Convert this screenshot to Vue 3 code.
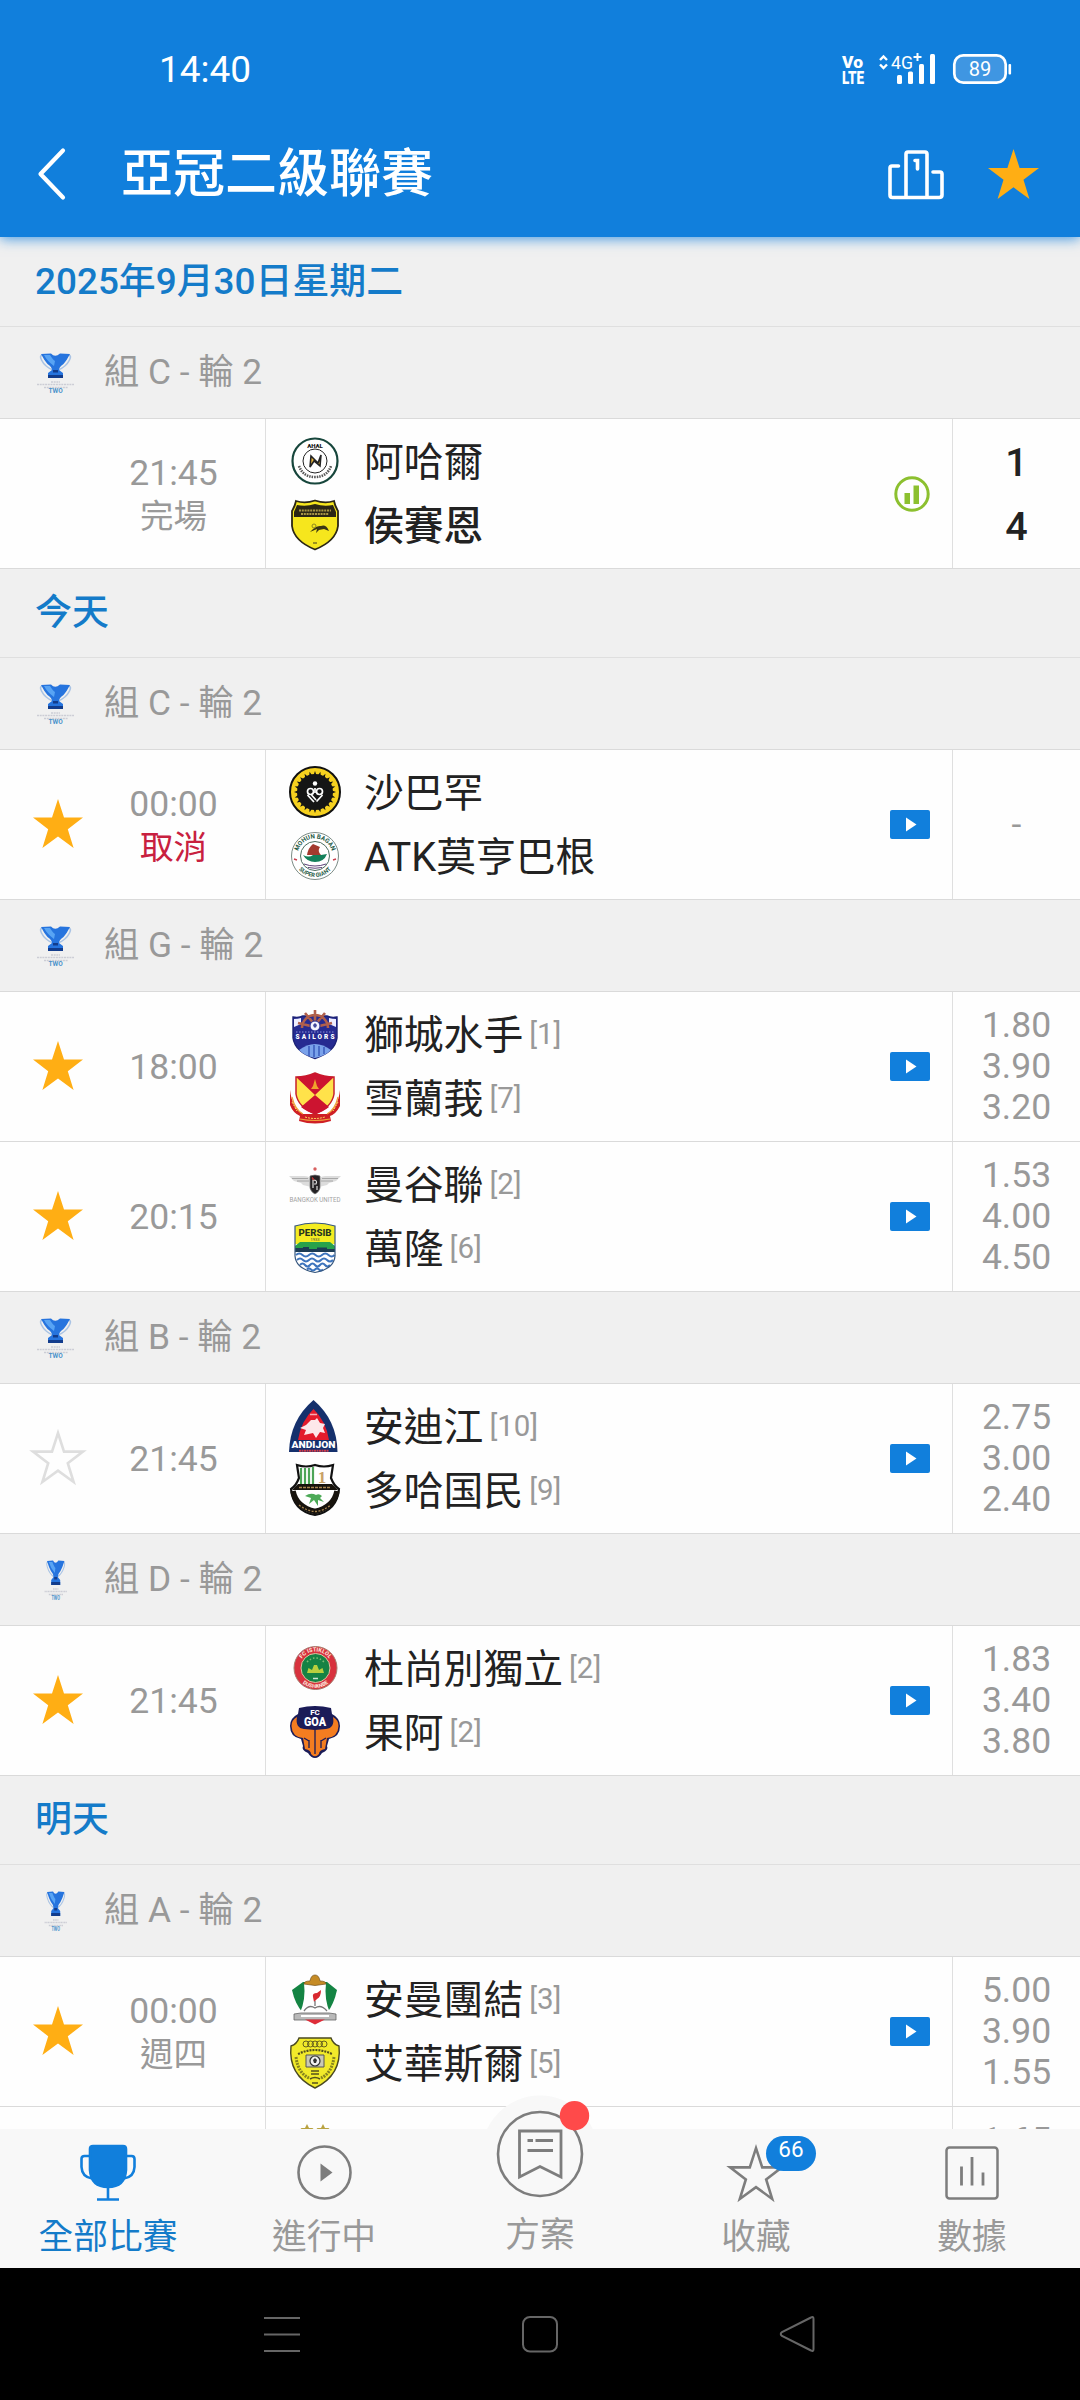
<script setup>
import { ref } from 'vue'

// Filled / outlined star shape shared by the header, the rows and the tab bar
const starPath = 'M25 0 L31 18.6 L50 18.6 L34.8 30.2 L40.6 49 L25 37.6 L9.4 49 L15.2 30.2 L0 18.6 L19 18.6 Z'

// Schedule grouped by day, then by group and round
const days = ref([
  {
    title: '2025年9月30日星期二',
    groups: [
      {
        name: '組 C - 輪 2',
        matches: [
          {
            time: '21:45', status: '完場', media: 'stats', score: ['1', '4'],
            teams: [{ name: '阿哈爾', crest: 'ahal' }, { name: '侯賽恩', crest: 'hussein', winner: true }]
          }
        ]
      }
    ]
  },
  {
    title: '今天',
    groups: [
      {
        name: '組 C - 輪 2',
        matches: [
          {
            star: 'on', time: '00:00', status: '取消', cancelled: true, media: 'video', odds: ['-'],
            teams: [{ name: '沙巴罕', crest: 'sepahan' }, { name: 'ATK莫亨巴根', crest: 'bagan' }]
          }
        ]
      },
      {
        name: '組 G - 輪 2',
        matches: [
          {
            star: 'on', time: '18:00', media: 'video', odds: ['1.80', '3.90', '3.20'],
            teams: [{ name: '獅城水手', rank: 1, crest: 'sailors' }, { name: '雪蘭莪', rank: 7, crest: 'selangor' }]
          },
          {
            star: 'on', time: '20:15', media: 'video', odds: ['1.53', '4.00', '4.50'],
            teams: [{ name: '曼谷聯', rank: 2, crest: 'bangkok' }, { name: '萬隆', rank: 6, crest: 'persib' }]
          }
        ]
      },
      {
        name: '組 B - 輪 2',
        matches: [
          {
            star: 'off', time: '21:45', media: 'video', odds: ['2.75', '3.00', '2.40'],
            teams: [{ name: '安迪江', rank: 10, crest: 'andijon' }, { name: '多哈国民', rank: 9, crest: 'ahli' }]
          }
        ]
      },
      {
        name: '組 D - 輪 2',
        narrow: true,
        matches: [
          {
            star: 'on', time: '21:45', media: 'video', odds: ['1.83', '3.40', '3.80'],
            teams: [{ name: '杜尚別獨立', rank: 2, crest: 'istiklol' }, { name: '果阿', rank: 2, crest: 'goa' }]
          }
        ]
      }
    ]
  },
  {
    title: '明天',
    groups: [
      {
        name: '組 A - 輪 2',
        narrow: true,
        matches: [
          {
            star: 'on', time: '00:00', status: '週四', media: 'video', odds: ['5.00', '3.90', '1.55'],
            teams: [{ name: '安曼團結', rank: 3, crest: 'wehdat' }, { name: '艾華斯爾', rank: 5, crest: 'wasl' }]
          },
          { odds: ['1.65', '', ''], teams: [{ crest: 'stars' }] }
        ]
      }
    ]
  }
])

// Bottom tabs
const tabs = ref([
  { key: 'all', label: '全部比賽' },
  { key: 'live', label: '進行中' },
  { key: 'tips', label: '方案' },
  { key: 'favorites', label: '收藏', badge: 66 },
  { key: 'data', label: '數據' }
])
const activeTab = ref('all')

// 24 short rays around the sun shaped crest
const rays = Array.from({ length: 24 }, (_, i) => i * 15)
</script>

<template>
  <div class="screen">
    <!-- Header with status bar -->
    <header class="header">
      <div class="status-bar">
        <span class="clock">14:40</span>
        <svg class="status-icons" width="176" height="36" viewBox="840 51 176 36" fill="#fff">
          <text x="842" y="67.500" font-size="17" font-weight="900" textLength="21" lengthAdjust="spacingAndGlyphs">Vo</text>
          <text x="842" y="84" font-size="17.500" font-weight="900" textLength="22" lengthAdjust="spacingAndGlyphs">LTE</text>
          <path d="M880 60 L883.5 56.5 L887 60 M880 64.500 L883.500 68 L887 64.500" fill="none" stroke="#fff" stroke-width="2.400" />
          <text x="891" y="69" font-size="17.500" textLength="22" lengthAdjust="spacingAndGlyphs">4G</text>
          <path d="M913.500 57 h8 M917.500 53 v8" stroke="#fff" stroke-width="2" />
          <rect x="897" y="75" width="5" height="9" rx="1.500" />
          <rect x="908" y="71.500" width="5" height="12.500" rx="1.500" />
          <rect x="919" y="64" width="5" height="20" rx="1.500" />
          <rect x="930" y="54" width="5" height="30" rx="1.500" />
          <rect x="954.300" y="55.300" width="51.400" height="27.400" rx="9" fill="#3f96e2" stroke="#fff" stroke-width="2.700" />
          <rect x="1008.500" y="64" width="2.600" height="10.500" rx="1" />
          <text x="980" y="75.700" font-size="20" text-anchor="middle">89</text>
        </svg>
      </div>
      <div class="title-bar">
        <svg class="back" width="30" height="52" viewBox="0 0 30 52">
          <path d="M27 2.500 L4.500 26 L27 49.500" fill="none" stroke="#fff" stroke-width="4.200" stroke-linecap="round" stroke-linejoin="round" />
        </svg>
        <h1>亞冠二級聯賽</h1>
        <svg class="podium" width="58" height="52" viewBox="0 0 58 52" fill="none" stroke="#fff" stroke-width="3.600" stroke-linejoin="round" stroke-linecap="round">
          <path d="M11.500 17 H5 Q3 17 3 19 V46 Q3 48.500 5.500 48.500 H52 Q55 48.500 55 46 V25 Q55 23 53 23 H46" />
          <path d="M19 48 V5 Q19 3 21 3 H38 Q40 3 40 5 V48" />
          <path d="M28 11.500 H30.500 V20" stroke-linejoin="miter" />
        </svg>
        <svg class="fav" width="51" height="50" viewBox="0 0 50 49"><path :d="starPath" fill="#ffae14" /></svg>
      </div>
    </header>

    <!-- Match list -->
    <main class="list">
      <section v-for="day in days" :key="day.title">
        <h2 class="day">{{ day.title }}</h2>
        <div v-for="(group, g) in day.groups" :key="g">
          <div class="group">
            <svg class="cup" width="39" height="42" viewBox="0 0 39 42">
              <g :transform="group.narrow ? 'translate(8 0) scale(.6 1)' : undefined">
                <path d="M7 3 Q3 3 5.500 8 Q9 15 17 18 M32 3 Q36 3 33.500 8 Q30 15 22 18" fill="none" stroke="#a9c3e4" stroke-width="1.600" />
                <path d="M5 2 L15 1.500 Q19 6 24 1.500 L34 2 Q31 8 27.500 12 Q23 15 23 18 L27 21 V26 H12 V21 L16 18 Q16 15 11.500 12 Q8 8 5 2Z" fill="#2674de" />
                <path d="M8 3 L14 3 Q17 8 19 9 L18 14 Q11 9 8 3Z" fill="#58a4f4" />
                <path d="M12 23 H27 V26 H12Z M17 18 H22 V20.500 H17Z" fill="#123c8c" />
                <path d="M15 30 H24 M1 32.500 H38 M8 35.500 H32" stroke="#cccdd5" stroke-width="1.600" stroke-dasharray="2 .7" />
                <text x="19.500" y="41" font-size="6.500" font-weight="700" fill="#4c93cb" text-anchor="middle">TWO</text>
              </g>
            </svg>
            <span class="group-name">{{ group.name }}</span>
          </div>

          <div v-for="(match, m) in group.matches" :key="m" class="match">
            <div class="star">
              <svg v-if="match.star === 'on'" width="50" height="49" viewBox="0 0 50 49"><path :d="starPath" fill="#ffae14" /></svg>
              <svg v-else-if="match.star === 'off'" width="52" height="53" viewBox="-1 -2 52 53"><path :d="starPath" fill="none" stroke="#dedede" stroke-width="2.600" /></svg>
            </div>
            <div class="when" :class="{ stacked: match.status }">
              <span>{{ match.time }}</span>
              <span v-if="match.status" class="status" :class="{ cancelled: match.cancelled }">{{ match.status }}</span>
            </div>

            <div class="teams">
              <div v-for="team in match.teams" :key="team.crest" class="team">
                <svg class="crest" width="52" height="52" viewBox="0 0 52 52">
                  <g v-if="team.crest === 'ahal'">
                    <circle cx="26" cy="26" r="22.500" fill="#fff" stroke="#17463c" stroke-width="2.200" />
                    <circle cx="26" cy="26" r="12" fill="#fff" stroke="#222" stroke-width="1" />
                    <text x="26" y="12.500" font-size="6" font-weight="900" text-anchor="middle" fill="#111">AHAL</text>
                    <path d="M10 31 Q14 42 26 42 Q38 42 42 31" fill="none" stroke="#555" stroke-width="2.600" stroke-dasharray="1.500 1" />
                    <path d="M21 32 L22 21 L29 28 L32 20 L31 31 L25 26Z" fill="#e8b43a" stroke="#222" stroke-width="1.600" />
                  </g>
                  <g v-else-if="team.crest === 'hussein'">
                    <path d="M7 2 Q16 5 26 1.500 Q36 5 45 2 Q46 7 49 12 V27 Q47 42 26 50.500 Q5 42 3 27 V12 Q6 7 7 2Z" fill="#f6e61d" stroke="#2b2615" stroke-width="1.800" />
                    <path d="M8 6 Q17 8 26 5 Q35 8 44 6 L47 13 V18 H5 V13Z" fill="#2b2615" />
                    <path d="M10 11.500 H42 M12 15 H40" stroke="#a89545" stroke-width="1.800" stroke-dasharray="2 .8" />
                    <path d="M21 33 Q27 26 32 27 Q37 25 40 32 L35 30 L30 31 L27 34 L28 30Z" fill="#3a3515" />
                    <circle cx="25" cy="27" r="2" fill="none" stroke="#8e8820" />
                    <path d="M24 44 H28" stroke="#7c7520" stroke-width="1.500" />
                  </g>
                  <g v-else-if="team.crest === 'sepahan'">
                    <circle cx="26" cy="26" r="25" fill="#f6d11f" stroke="#111" stroke-width="2" />
                    <path v-for="deg in rays" :key="deg" d="M24.600 9 L26 5 L27.400 9Z" fill="#111" :transform="`rotate(${deg} 26 26)`" />
                    <circle cx="26" cy="26" r="18" fill="#151515" />
                    <circle cx="26" cy="17.500" r="2.200" fill="#fff" />
                    <circle cx="21.500" cy="25.500" r="3" fill="none" stroke="#fff" stroke-width="1.700" />
                    <circle cx="30.500" cy="25.500" r="3" fill="none" stroke="#fff" stroke-width="1.700" />
                    <path d="M18.500 29 L25 36 M22.500 29 L27 34 M33.500 29 L27.500 35.500 M26 22 V27" stroke="#fff" stroke-width="1.700" />
                  </g>
                  <g v-else-if="team.crest === 'bagan'">
                    <circle cx="26" cy="26" r="23.500" fill="#fff" stroke="#5b6d66" stroke-width=".8" />
                    <circle cx="26" cy="26" r="14.500" fill="#fff" stroke="#4c6e60" stroke-width="1" />
                    <path id="bagan-top" d="M8.500 26 A17.500 17.500 0 0 1 43.500 26" fill="none" />
                    <path id="bagan-bottom" d="M5 26 A21 21 0 0 0 47 26" fill="none" />
                    <text font-size="6.200" font-weight="700" fill="#1f5b46"><textPath href="#bagan-top" startOffset="50%" text-anchor="middle">MOHUN BAGAN</textPath></text>
                    <text font-size="5.800" font-weight="700" fill="#1f5b46"><textPath href="#bagan-bottom" startOffset="50%" text-anchor="middle">SUPER GIANT</textPath></text>
                    <path d="M18 25 Q19 18 24 14 L31 17 Q28 21 32 25Z" fill="#a33a2e" />
                    <path d="M14 25 Q20 28 24 25 H32 L38 24 Q35 32 26 32 Q18 32 14 25Z" fill="#13805a" />
                    <path d="M15 34 Q26 38 37 34 M19 37.500 Q26 39 33 37.500" fill="none" stroke="#315" stroke-width=".8" />
                    <path d="M5 29 l3 1 M44 30 l3 -1" stroke="#c8404f" stroke-width="1.500" />
                  </g>
                  <g v-else-if="team.crest === 'sailors'">
                    <path d="M4 9 Q10 10 14 8 H38 Q42 10 48 9 V30 Q46 44 26 50.500 Q6 44 4 30Z" fill="#262b91" stroke="#1c2276" stroke-width="1.400" />
                    <path d="M5 11 Q9 11 12 10 L12 16 L5 19Z M47 11 Q43 11 40 10 L40 16 L47 19Z" fill="#eef" />
                    <path d="M13 20 A13 13 0 0 1 39 20 M26 17 V2 M26 17 L16 5 M26 17 L36 5 M26 19 L9 15 M26 19 L43 15" fill="none" stroke="#b0604c" stroke-width="2.600" />
                    <circle cx="26" cy="18" r="5" fill="#f5f5ff" stroke="#262b91" stroke-width="1" />
                    <path d="M24 17 l2 -2 l2 2 l-1 2.500 h-2Z" fill="#444a9d" />
                    <text x="26" y="31" font-size="6.500" font-weight="900" fill="#fff" text-anchor="middle" textLength="39">SAILORS</text>
                    <path d="M10 42 Q18 36 26 36 Q34 36 42 42 Q36 48 26 50 Q16 48 10 42Z" fill="#7aa2ea" />
                    <path d="M20 38 V48 M25 37 V49 M30 38 V48 M35 39 V46" stroke="#2f50b5" stroke-width="1.300" />
                    <path d="M7 24 H45" stroke="#8b91d9" stroke-width="1" stroke-dasharray="1.500 1.500" />
                  </g>
                  <g v-else-if="team.crest === 'selangor'">
                    <path d="M1 18 Q3 36 14 42 L38 42 Q49 36 51 18 V34 Q47 42 41 44 L42 49 Q26 54 10 49 L11 44 Q4 41 1 33Z" fill="#cf1f24" />
                    <path d="M3 25 Q6 38 14 42 M49 25 Q46 38 38 42 M11 47 Q26 50 41 47" fill="none" stroke="#f0a33c" stroke-width="1.200" />
                    <path d="M7 5 Q17 5 26 1 Q35 5 45 5 V22 Q43 35 26 42 Q9 35 7 22Z" fill="#ffe24a" stroke="#c6202c" stroke-width="1.500" />
                    <path d="M7 5 Q17 5 26 1 Q35 5 45 5 L26 23Z M26 23 L40 35 Q34 40 26 42 Q18 40 12 35Z" fill="#cc1430" />
                    <path d="M26 7 L28 14 L30 17 H22 L24 14Z" fill="#f0a42c" />
                    <path d="M16 45 Q26 48 36 45 M3 30 L8 39 M49 30 L44 39" fill="none" stroke="#ffdf61" stroke-width="1" stroke-dasharray="2 1" />
                  </g>
                  <g v-else-if="team.crest === 'bangkok'">
                    <circle cx="26" cy="11" r="1.700" fill="#d8605f" />
                    <path d="M0 18 H15 Q20 18 22 21 V29 L14 27 L12 25 L5 23Z M52 18 H37 Q32 18 30 21 V29 L38 27 L40 25 L47 23Z" fill="#dcdcdc" />
                    <path d="M3 20.500 H19 M8 23 H20 M49 20.500 H33 M44 23 H32" stroke="#9a9a9a" stroke-width=".8" />
                    <path d="M21 18 Q26 16 31 18 V30 Q30 34 26 36 Q22 34 21 30Z" fill="#242124" stroke="#777" stroke-width=".7" />
                    <path d="M24 30 V22 Q29 22 27 26 H25 M28 28 V32" fill="none" stroke="#ddd" stroke-width="1.200" />
                    <path d="M23 19.500 L25 22" stroke="#b33" stroke-width="1.300" />
                    <text x="26" y="43.500" font-size="6.500" fill="#a3a3a3" text-anchor="middle" textLength="51" lengthAdjust="spacingAndGlyphs">BANGKOK UNITED</text>
                  </g>
                  <g v-else-if="team.crest === 'persib'">
                    <path d="M6 4 Q26 -2 46 4 V34 Q45 47 26 50.500 Q7 47 6 34Z" fill="#fff" />
                    <path d="M6 4 Q26 -2 46 4 V22 H6Z" fill="#f4ec21" />
                    <path d="M6 24 L11 20 H41 L46 24 V28 H6Z" fill="#28a24b" />
                    <path d="M6 26 H14 V25 H20 V27 H28 V25.500 H38 V27 H46 V30 H6Z" fill="#1d3c55" />
                    <path d="M7 33 q3.300 -3 6.500 0 t6.500 0 t6.500 0 t6.500 0 t6.500 0 t6 0 M8 38 q3 -3 6 0 t6 0 t6 0 t6 0 t6 0 t6 0 M11 43 q2.500 -3 5 0 t5 0 t5 0 t5 0 t5 0 t5 0 M18 47.500 q2 -2 4 0 t4 0 t4 0 t4 0" fill="none" stroke="#3d74bd" stroke-width="2" />
                    <path d="M6 4 Q26 -2 46 4 V34 Q45 47 26 50.500 Q7 47 6 34Z" fill="none" stroke="#36577e" stroke-width="1.200" />
                    <text x="26" y="13.500" font-size="9" font-weight="800" fill="#263520" text-anchor="middle" textLength="33" lengthAdjust="spacingAndGlyphs">PERSIB</text>
                    <text x="26" y="18.500" font-size="4" fill="#444" text-anchor="middle">1933</text>
                  </g>
                  <g v-else-if="team.crest === 'andijon'">
                    <path d="M24.500 0 Q48 20 48.500 52 H0 Q1 20 24.500 0Z" fill="#15306c" />
                    <path d="M24.500 9 Q37 21 40 40 H9 Q12 21 24.500 9Z" fill="#e31b2c" />
                    <path d="M11 28 L17 25 L22 20 L26 20 L28 18 L31 23 L36 24 L34 28 L36 33 L31 32 L27 38 L24 33 L15 35 L17 30Z" fill="#fff" opacity=".9" />
                    <path d="M21 14.500 H28" stroke="#f6aeb4" stroke-width="1.500" />
                    <text x="24.500" y="47.500" font-size="8.500" font-weight="900" fill="#fff" text-anchor="middle" textLength="44" lengthAdjust="spacingAndGlyphs">ANDIJON</text>
                    <path d="M10 50.700 H40" stroke="#d33b48" stroke-width="2" stroke-dasharray="2 .5" />
                  </g>
                  <g v-else-if="team.crest === 'ahli'">
                    <path d="M8 1 Q17 4 26 1 Q35 4 44 1 L42 14 Q45 22 50 25 Q48 47 26 51 Q4 47 2 25 Q7 22 10 14Z" fill="#fff" stroke="#111" stroke-width="2.200" />
                    <path d="M12 4 V20 M16 4 V20 M20 4 V20 M24 3 V20" stroke="#4da557" stroke-width="2.200" />
                    <text x="33" y="19" font-size="17" font-family="'Liberation Serif', serif" font-weight="700" fill="#c9a367" text-anchor="middle">1</text>
                    <path d="M9 20 H43 L49 26 H3Z" fill="#17130d" />
                    <path d="M10 23.500 H42" stroke="#a98651" stroke-width="1.600" stroke-dasharray="3 1" />
                    <path d="M4 27 Q7 43 26 47.500 Q45 43 48 27" fill="none" stroke="#17130d" stroke-width="5.500" />
                    <path d="M10 41 Q18 47 26 47.500 Q34 47 42 41" fill="none" stroke="#a98651" stroke-width="1.300" stroke-dasharray="2 1.500" />
                    <path d="M16 32 Q22 28 27 31 Q30 29 33 32 L31 34 L35 38 L29 36 L29 42 L25 36 L20 40 L22 34Z" fill="#4daa57" />
                  </g>
                  <g v-else-if="team.crest === 'istiklol'">
                    <circle cx="26.500" cy="26" r="21.500" fill="#d8323e" stroke="#a97d70" stroke-width="1" />
                    <circle cx="26.500" cy="26" r="14.500" fill="#158244" stroke="#e5c1a0" stroke-width="1" />
                    <path id="ist-top" d="M10 26 A16.500 16.500 0 0 1 43 26" fill="none" />
                    <path id="ist-bottom" d="M6.500 26 A20 20 0 0 0 46.500 26" fill="none" />
                    <text font-size="5.600" font-weight="800" fill="#fbe3da"><textPath href="#ist-top" startOffset="50%" text-anchor="middle">FC ISTIKLOL</textPath></text>
                    <text font-size="5.400" font-weight="800" fill="#fbe3da"><textPath href="#ist-bottom" startOffset="50%" text-anchor="middle">DUSHANBE</textPath></text>
                    <path d="M18 31 L19.500 26 L23 28 L25 23 H28 L30 28 L33.500 26 L35 31Z M20 33 H33" fill="#b9cf3e" />
                    <path d="M18 20 Q26.500 12 35 20" fill="none" stroke="#7fbc74" stroke-width="1.500" stroke-dasharray="1.500 2" />
                    <path d="M24 36.500 H29" stroke="#cfe4d5" stroke-width="1.500" />
                  </g>
                  <g v-else-if="team.crest === 'goa'">
                    <path d="M10 2 Q26 -2 42 2 L43 8 Q51 12 51 20 Q51 31 40 33 L38 40 Q40 44 33 47 Q30 52 26 52 Q22 52 19 47 Q12 44 14 40 L12 33 Q1 31 1 20 Q1 12 9 8Z" fill="#1b1c58" />
                    <path d="M8 11 Q2.500 14 2.500 20 Q3 31 14 32 L16 43 Q22 44 22 48 Q25 51 26 50 Q27 51 30 48 Q30 44 36 43 L38 32 Q49 31 49.500 20 Q49.500 14 44 11 Q46 22 37 23 L26 24 L15 23 Q6 22 8 11Z" fill="#f47d20" />
                    <path d="M26 24 V48 M20 34 V42 M32 34 V42 M15 32 L20 35 M37 32 L32 35" stroke="#1b1c58" stroke-width="1.300" fill="none" />
                    <text x="26" y="9" font-size="8" font-weight="800" fill="#fff" text-anchor="middle">FC</text>
                    <text x="26" y="20" font-size="12" font-weight="900" fill="#fff" text-anchor="middle" textLength="22" lengthAdjust="spacingAndGlyphs">GOA</text>
                  </g>
                  <g v-else-if="team.crest === 'wehdat'">
                    <path d="M14 9 L38 9 L48 17 Q45 31 38 40 L26 47 L14 40 Q6 31 3 17Z" fill="#148443" />
                    <path d="M15 10 H37 Q35 26 41 40 H11 Q17 26 15 10Z" fill="#fff" />
                    <path d="M15 11 Q15 8 21 8 Q22 2 26 2 Q30 2 31 8 Q37 8 37 11 L26 12.500Z" fill="#c58b25" stroke="#735018" stroke-width=".7" />
                    <path d="M24 24 Q23 20 28 20 L32 17 Q32 24 28 26 L25 29Z" fill="#d82930" />
                    <path d="M26 28 V33 M15 38 Q20 31 26 35 Q32 31 38 38" fill="none" stroke="#777" stroke-width="1.300" />
                    <path d="M5 41 L12 40 H40 L47 41 V47 H5Z" fill="#b9b9b9" stroke="#666" stroke-width=".8" />
                    <path d="M12 43 H40" stroke="#fff" stroke-width="2" />
                    <path d="M16 46.500 H36 L26 51.500Z" fill="#de2d39" />
                  </g>
                  <g v-else-if="team.crest === 'wasl'">
                    <path d="M10 1 H42 Q44 7 50 9 Q53 38 26 51 Q-1 38 2 9 Q8 7 10 1Z" fill="#f1ea2a" stroke="#4a4922" stroke-width="1.400" />
                    <g fill="none" stroke="#66611d" stroke-width="1">
                      <circle cx="17" cy="7" r="3" /><circle cx="21.500" cy="7" r="3" /><circle cx="26" cy="7" r="3" /><circle cx="30.500" cy="7" r="3" /><circle cx="35" cy="7" r="3" />
                    </g>
                    <path d="M9 17 Q26 9 43 17" fill="none" stroke="#55511c" stroke-width="2.200" stroke-dasharray="2 1" />
                    <path d="M7 20 Q9 36 20 41 M45 20 Q43 36 32 41" fill="none" stroke="#87841f" stroke-width="3" stroke-dasharray="2 1" />
                    <path d="M17 18 H35 V30 H17Z" fill="#c9c9b4" stroke="#555" stroke-width="1" />
                    <circle cx="26" cy="24" r="5" fill="#efefef" stroke="#333" stroke-width="1.200" />
                    <path d="M24 23 l2 -2 l2 2 l-1 3 h-2Z" fill="#333" />
                    <path d="M22 34 H30 M22 37 H30 M21 42 Q26 39 31 42 M23 46 H29" stroke="#55511c" stroke-width="1.600" fill="none" />
                  </g>
                  <g v-else-if="team.crest === 'stars'" fill="#b9a341">
                    <path d="M18 1 L20 5 H24.500 L21 8.500 L22.500 13 L18 10 L13.500 13 L15 8.500 L11.500 5 H16Z" />
                    <path d="M34 1 L36 5 H40.500 L37 8.500 L38.500 13 L34 10 L29.500 13 L31 8.500 L27.500 5 H32Z" />
                  </g>
                </svg>
                <span class="name" :class="{ winner: team.winner }">{{ team.name }}</span>
                <span v-if="team.rank" class="rank">[{{ team.rank }}]</span>
              </div>
            </div>

            <div class="media">
              <svg v-if="match.media === 'video'" width="40" height="29" viewBox="0 0 40 29">
                <rect width="40" height="29" rx="2" fill="#117fdc" />
                <path d="M16 7.500 L26.500 14.500 L16 21.500Z" fill="#fff" />
              </svg>
              <svg v-else-if="match.media === 'stats'" width="36" height="36" viewBox="0 0 36 36">
                <circle cx="18" cy="18" r="16.200" fill="none" stroke="#8cc02f" stroke-width="3" />
                <path d="M10.500 17 H16 V28 H10.500Z M19.500 9.500 H25 V28 H19.500Z" fill="#8cc02f" />
              </svg>
            </div>

            <div v-if="match.score" class="result score">
              <span v-for="(goals, s) in match.score" :key="s">{{ goals }}</span>
            </div>
            <div v-else class="result">
              <span v-for="(odd, o) in match.odds" :key="o">{{ odd }}</span>
            </div>
          </div>
        </div>
      </section>
    </main>

    <!-- Tab bar -->
    <nav class="tabs">
      <div v-for="tab in tabs" :key="tab.key" class="tab" :class="[tab.key, { active: tab.key === activeTab }]" @click="activeTab = tab.key">
        <div class="icon">
          <svg v-if="tab.key === 'all'" width="56" height="57" viewBox="0 0 56 57" fill="none" stroke="#117fdc" stroke-width="2.600">
            <path d="M10 11 H4.500 Q1.500 11 1.500 14 V22 Q2 32 12 33.500 M46 11 H51.500 Q54.500 11 54.500 14 V22 Q54 32 44 33.500" />
            <path d="M10 4 Q10 1 13 1 H43 Q46 1 46 4 V25 Q45 42 28 42 Q11 42 10 25Z" fill="#117fdc" />
            <path d="M28 40 V54 M17 54.500 H39" />
          </svg>
          <svg v-else-if="tab.key === 'live'" width="56" height="56" viewBox="0 0 56 56">
            <circle cx="28.500" cy="27.500" r="26" fill="none" stroke="#7d7d7d" stroke-width="2.600" />
            <path d="M24.500 18.500 L36.500 27.500 L24.500 36.500Z" fill="#7d7d7d" />
          </svg>
          <svg v-else-if="tab.key === 'tips'" class="bump" width="120" height="120" viewBox="0 0 120 120" fill="none" stroke="#7d7d7d">
            <circle cx="60" cy="60" r="58.500" fill="#f8f8f8" stroke="none" />
            <circle cx="60" cy="60" r="42" stroke-width="2.600" />
            <path d="M39.500 37 H81 V83 L60 72.500 L39.500 83Z" stroke-width="2.800" />
            <path d="M47.500 46.500 H53 M55.500 46.500 H73 M47.500 56.500 H73" stroke-width="2.800" />
            <circle cx="94.500" cy="21.700" r="14.700" fill="#ff4a4a" stroke="none" />
          </svg>
          <svg v-else-if="tab.key === 'favorites'" width="60" height="56" viewBox="-1 -3 52 54">
            <path :d="starPath" fill="none" stroke="#7d7d7d" stroke-width="2.500" />
          </svg>
          <svg v-else width="56" height="56" viewBox="0 0 56 56" fill="none" stroke="#7d7d7d" stroke-width="2.800">
            <rect x="2.500" y="2.500" width="51" height="51" rx="3" stroke-width="2.500" />
            <path d="M17.500 21.500 V40.500 M28 12 V40.500 M39 27.500 V40.500" />
          </svg>
          <span v-if="tab.badge" class="badge">{{ tab.badge }}</span>
        </div>
        <span class="label">{{ tab.label }}</span>
      </div>
    </nav>

    <!-- System navigation -->
    <div class="system-nav">
      <svg width="38" height="38" viewBox="0 0 38 38"><path d="M1 3 H37 M1 19.500 H37 M1 36 H37" stroke="#666" stroke-width="2.200" /></svg>
      <svg width="38" height="38" viewBox="0 0 38 38"><rect x="2" y="2" width="34" height="34.500" rx="7" fill="none" stroke="#666" stroke-width="2" /></svg>
      <svg width="38" height="38" viewBox="0 0 38 38"><path d="M34.500 4 V34 Q34.500 37 32 35.500 L3 21 Q0.500 19 3 17 L32 2.500 Q34.500 1 34.500 4Z" fill="none" stroke="#666" stroke-width="2" /></svg>
    </div>
  </div>
</template>

<style>
body {
  margin: 0;
}
</style>

<style scoped>
.screen {
  width: 1080px;
  height: 2400px;
  display: flex;
  flex-direction: column;
  overflow: hidden;
  background: #f0f0f0;
  color: #222;
  font-family: Roboto, 'Noto Sans CJK TC', sans-serif;
}

svg {
  display: block;
  flex: none;
  overflow: visible;
}

/* Header */
.header {
  position: relative;
  z-index: 1;
  height: 237px;
  flex: none;
  background: #117fdc;
  color: #fff;
  box-shadow: 0 2px 12px rgba(17, 127, 220, 0.75);
}

.status-bar {
  height: 82px;
  padding: 28px 64px 0 159px;
  display: flex;
  align-items: center;
  justify-content: space-between;
}

.clock {
  font-size: 37px;
}

.title-bar {
  height: 127px;
  padding: 0 41px 0 36px;
  display: flex;
  align-items: center;
}

h1 {
  flex: 1;
  margin: 2px 0 0 55px;
  font-size: 52px;
  font-weight: 500;
  line-height: 60px;
}

.podium {
  margin: 3px 43px 0 0;
}

/* List */
.list {
  flex: 1;
  min-height: 0;
  padding-top: 1px;
  overflow: hidden;
}

.day {
  height: 88px;
  margin: 0;
  padding-left: 35px;
  border-bottom: 1px solid #dfdfdf;
  color: #147bc9;
  font-size: 36.9px;
  font-weight: 500;
  line-height: 88px;
}

.group {
  height: 91px;
  padding-left: 36px;
  display: flex;
  align-items: center;
  gap: 29px;
  border-bottom: 1px solid #dadada;
  color: #999;
  font-size: 35.3px;
}

.group-name {
  padding-bottom: 9px;
}

.match {
  height: 149px;
  display: flex;
  border-bottom: 1px solid #dadada;
  background: #fefefe;
}

.star {
  width: 115px;
  padding-bottom: 2px;
  display: flex;
  align-items: center;
  justify-content: center;
}

.when {
  width: 117px;
  padding-right: 33px;
  display: flex;
  flex-direction: column;
  align-items: center;
  justify-content: center;
  border-right: 1px solid #dfdfdf;
  color: #999;
  font-size: 35.5px;
  line-height: 44px;
}

.stacked {
  padding-top: 3px;
}

.status {
  font-size: 33.5px;
}

.cancelled {
  color: #c8203f;
}

.teams {
  flex: 1;
  padding: 10px 0 0 23px;
}

.team {
  height: 64px;
  display: flex;
  align-items: center;
}

.name {
  margin-left: 23px;
  padding-top: 3px;
  font-size: 39.8px;
  line-height: 60px;
}

.winner {
  font-weight: 500;
}

.rank {
  margin-left: 6px;
  color: #999;
  font-size: 29.5px;
}

.media {
  width: 62px;
  display: flex;
  align-items: center;
  justify-content: flex-end;
  padding-right: 22px;
}

.result {
  width: 127px;
  display: flex;
  flex-direction: column;
  align-items: center;
  justify-content: center;
  border-left: 1px solid #dfdfdf;
  color: #999;
  font-size: 35.5px;
}

.result span {
  height: 41px;
  line-height: 41px;
}

.score {
  color: #222;
  font-size: 39.5px;
  font-weight: 500;
}

.score span {
  height: 64px;
  line-height: 65px;
}

/* Tab bar */
.tabs {
  position: relative;
  height: 139px;
  flex: none;
  display: flex;
  background: #f8f8f8;
}

.tab {
  flex: 1;
  padding-top: 16px;
  display: flex;
  flex-direction: column;
  align-items: center;
  color: #999;
}

.active {
  color: #147bc9;
}

.icon {
  position: relative;
  height: 56px;
  min-width: 56px;
}

.bump {
  position: absolute;
  left: -32px;
  top: -51px;
}

.badge {
  position: absolute;
  left: 40px;
  top: -9px;
  width: 50px;
  height: 35px;
  border-radius: 18px;
  background: #117fdc;
  color: #fff;
  font-size: 22.5px;
  line-height: 27px;
  text-align: center;
}

.label {
  margin-top: 11px;
  font-size: 34.7px;
  line-height: 50px;
}

.tips .label {
  margin-top: 9px;
}

/* System navigation */
.system-nav {
  height: 132px;
  flex: none;
  display: flex;
  align-items: center;
  justify-content: center;
  gap: 220px;
  background: #000;
}
</style>
